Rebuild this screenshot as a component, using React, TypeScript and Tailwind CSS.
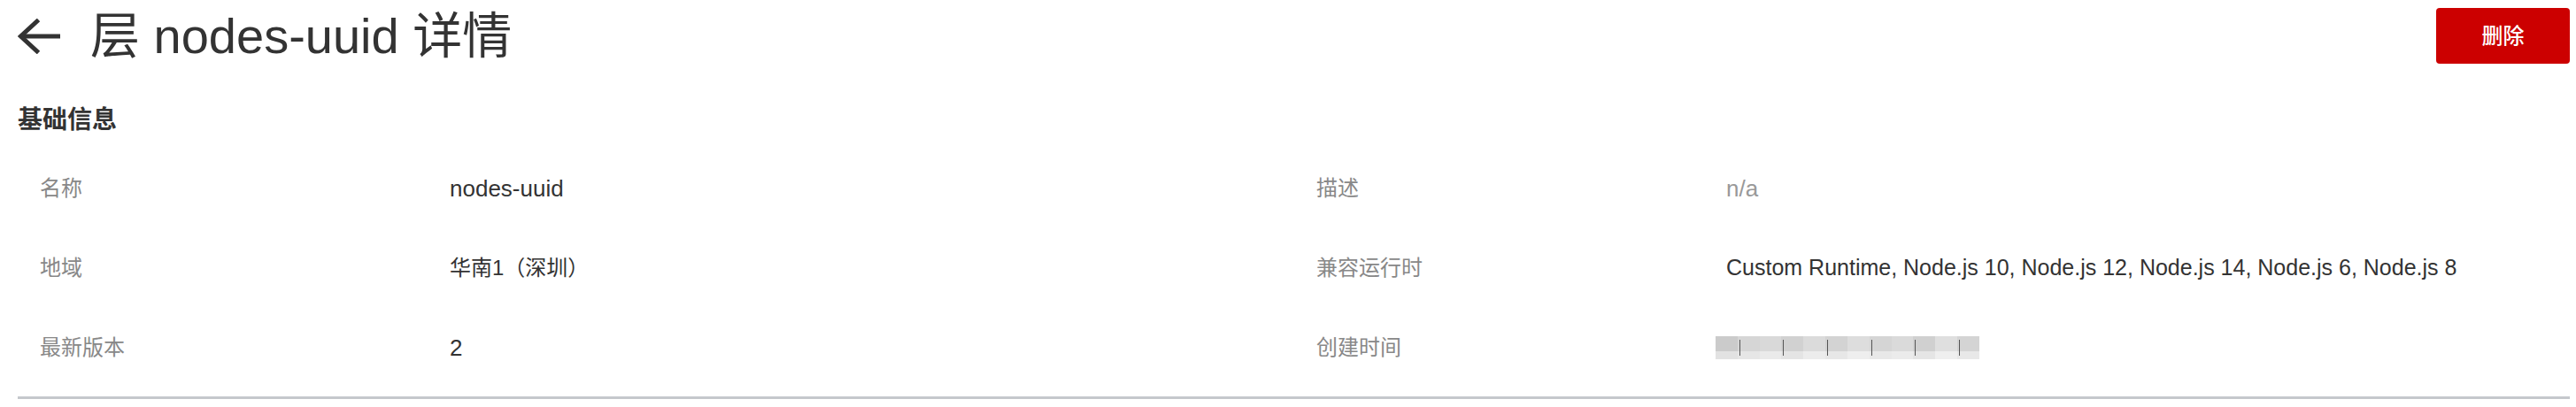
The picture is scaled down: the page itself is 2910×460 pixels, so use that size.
const rows: { label: string; value: React.ReactNode }[] = [
  { label: "名称", value: <span className="text-[26px] text-[#333]">nodes-uuid</span> },
  { label: "描述", value: <span className="text-[26px] text-[#999]">n/a</span> },
  { label: "地域", value: <span className="text-[24px] text-[#333]">华南1（深圳）</span> },
  {
    label: "兼容运行时",
    value: (
      <span className="text-[25px] text-[#333]">
        Custom Runtime, Node.js 10, Node.js 12, Node.js 14, Node.js 6, Node.js 8
      </span>
    ),
  },
  { label: "最新版本", value: <span className="text-[26px] text-[#333]">2</span> },
  { label: "创建时间", value: <Blurred /> },
];

const cells = [
  ["#cbcbcb", "#e2e2e2"],
  ["#d6d6d6", "#e6e6e6"],
  ["#d9d9d9", "#eaeaea"],
  ["#d1d1d1", "#e4e4e4"],
  ["#dbdbdb", "#ececec"],
  ["#d3d3d3", "#e7e7e7"],
  ["#dddddd", "#eeeeee"],
  ["#d5d5d5", "#e8e8e8"],
  ["#dadada", "#ebebeb"],
  ["#d0d0d0", "#e5e5e5"],
  ["#dfdfdf", "#efefef"],
  ["#d4d4d4", "#e8e8e8"],
];

function Blurred() {
  // pixelated timestamp, as in the screenshot
  return (
    <div className="-ml-[12px] flex h-[26px] w-[298px]">
      {cells.map(([top, bottom], i) => (
        <div key={i} className="flex flex-1 flex-col">
          <div className="h-[17px]" style={{ background: top }} />
          <div className="h-[9px]" style={{ background: bottom }} />
          {i % 2 === 1 && <div className="-mt-[22px] ml-[2px] h-[18px] w-px bg-[#555]" />}
        </div>
      ))}
    </div>
  );
}

export default function App() {
  return (
    <div className="min-h-screen bg-white pl-[20px] pr-[7px] font-['Liberation_Sans','Noto_Sans_CJK_SC',sans-serif]">
      <header className="mt-[9px] flex h-[63px] items-center justify-between">
        <div className="flex items-center">
          <svg width="48" height="40" viewBox="0 0 48 40" fill="none" stroke="#333" strokeWidth="5">
            <path d="M48 20H3" />
            <path d="M23.5 1.5L3.5 20l20 18.5" />
          </svg>
          <h1 className="ml-[34px] text-[56px] leading-none text-[#333]">层 nodes-uuid 详情</h1>
        </div>
        <button className="h-[63px] w-[151px] rounded-[4px] bg-[#cc0000] text-[24px] font-medium text-white">
          删除
        </button>
      </header>

      <section className="mt-[50px] border-b-[3px] border-[#c5c8cc] pb-[10px]">
        <h2 className="text-[28px] leading-[28px] font-bold text-[#333]">基础信息</h2>
        <div className="mt-[18px] grid grid-cols-[1442px_1fr] pl-[25px]">
          {rows.map((r) => (
            <div key={r.label} className="flex h-[90px] items-center">
              <span className="w-[463px] shrink-0 text-[24px] text-[#888]">{r.label}</span>
              {r.value}
            </div>
          ))}
        </div>
      </section>
    </div>
  );
}
